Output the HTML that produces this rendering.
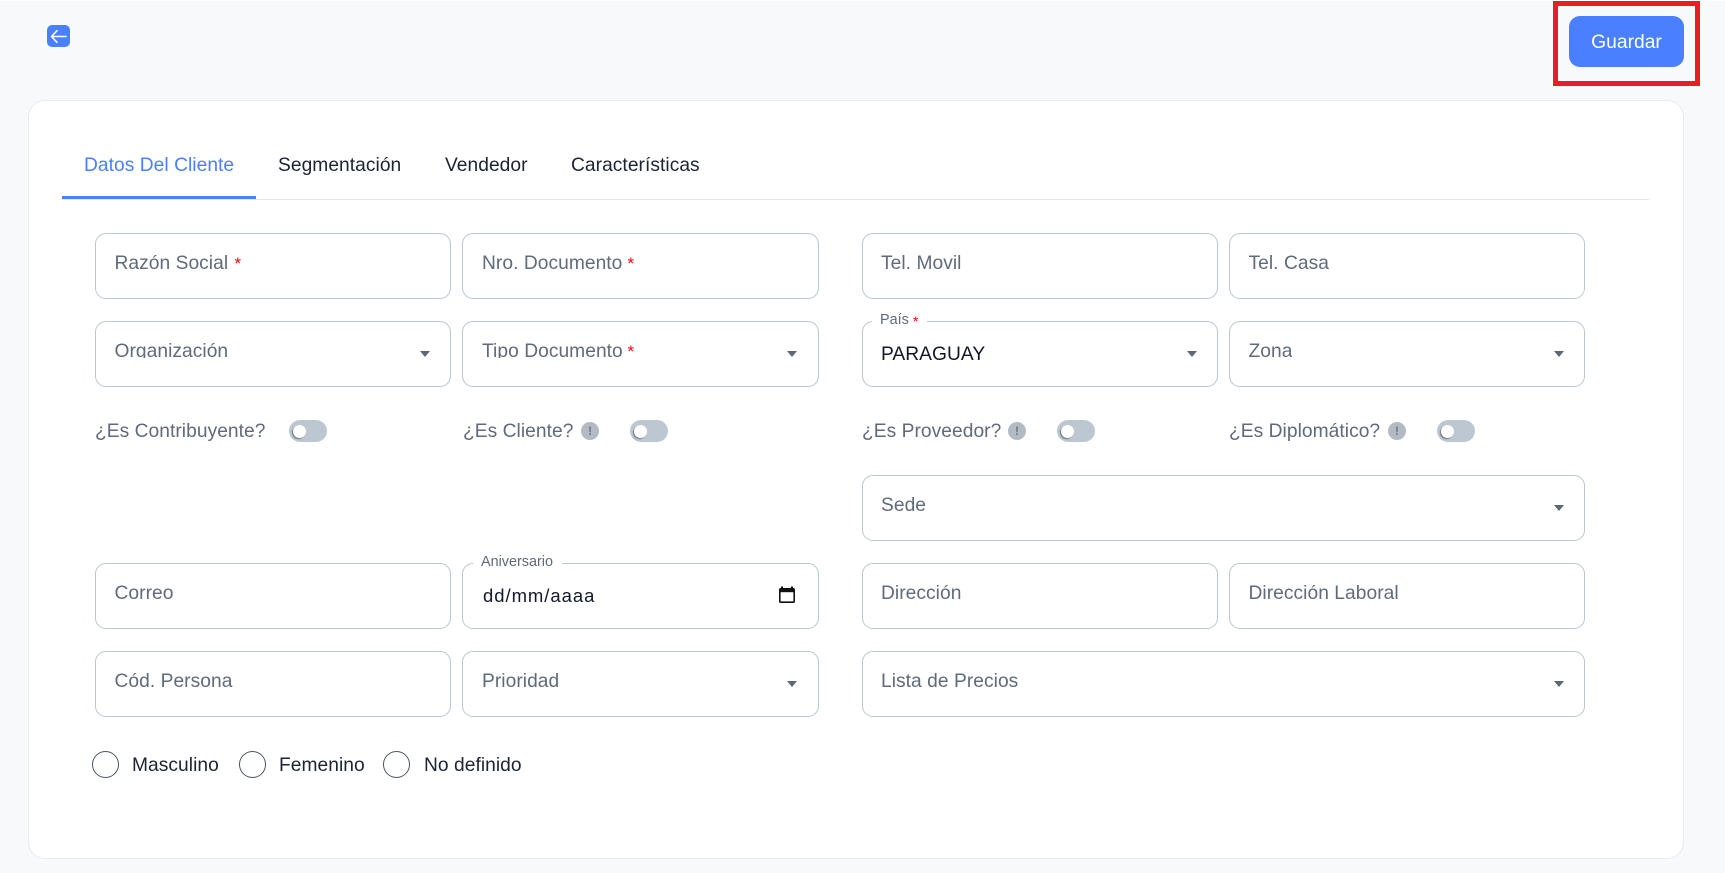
<!DOCTYPE html>
<html lang="es">
<head>
<meta charset="utf-8">
<title>Datos Del Cliente</title>
<style>
html,body{margin:0;padding:0;width:1725px;height:873px;overflow:hidden;background:#f8f9fb;font-family:"Liberation Sans",Arial,sans-serif}
#top{position:absolute;left:0;top:0;width:1725px;height:1px;background:#fff}
.t{position:absolute;white-space:nowrap;line-height:24px;height:24px;font-size:19.2px;letter-spacing:.05px;color:#5f6b7a}
.clip{height:18px;overflow:hidden}
.d{color:#1b2433}
.f{position:absolute;box-sizing:border-box;border:1px solid #bcc6d0;border-radius:11px;background:#fff}
.c{position:absolute;width:0;height:0;border-left:5.5px solid transparent;border-right:5.5px solid transparent;border-top:6.5px solid #5c6876}
.a{position:absolute;color:#f00;font-size:17px;line-height:16px;height:16px}
.s{position:absolute;width:38px;height:22px;top:420px;border-radius:11px;background:#bcc7d1}
.s i{position:absolute;left:3.5px;top:4.5px;width:13px;height:13px;border-radius:50%;background:#fff;box-shadow:-1px 1px 1px #6f7985}
.n{position:absolute;top:422px;width:18px;height:18px;border-radius:50%;background:#b2bac3;color:#6f7883;font-size:12px;line-height:18px;text-align:center;font-weight:bold}
.r{position:absolute;top:751px;width:27px;height:27px;box-sizing:border-box;border:1px solid #4b5563;border-radius:50%;background:#fff}
.g{position:absolute;background:#fff;height:3px}
.sm{position:absolute;white-space:nowrap;font-size:14.4px;line-height:16px;height:16px;color:#5f6b7a}
</style>
</head>
<body>
<div id="top"></div>

<div style="position:absolute;left:47px;top:25px;width:23px;height:22px;border-radius:5px;background:#4a80ff"></div>
<svg style="position:absolute;left:47px;top:25px" width="23" height="22" viewBox="0 0 23 22" fill="none" stroke="#fff" stroke-width="1.5" stroke-linecap="round" stroke-linejoin="round"><path d="M19 11.5H4.5M10 5.7L4.5 11.5l5.5 5.8"/></svg>

<div style="position:absolute;left:1553px;top:1px;width:147px;height:85px;box-sizing:border-box;border:5px solid #ec1c24"></div>
<div style="position:absolute;left:1569px;top:16px;width:115px;height:51px;border-radius:11px;background:#4a80ff;color:#fff;font-size:19.3px;line-height:53px;text-align:center">Guardar</div>

<div style="position:absolute;left:28px;top:100px;width:1656px;height:759px;box-sizing:border-box;background:#fff;border:1px solid #e8ebef;border-radius:17px"></div>

<div style="position:absolute;left:62px;top:199px;width:1587px;height:1px;background:#e5e7eb"></div>
<div style="position:absolute;left:62px;top:196px;width:194px;height:3px;background:#4a80ff"></div>
<div class="t" style="left:84px;top:154px;color:#4a80ff">Datos Del Cliente</div>
<div class="t d" style="left:278px;top:154px">Segmentación</div>
<div class="t d" style="left:445px;top:154px">Vendedor</div>
<div class="t d" style="left:571px;top:154px">Características</div>

<!-- row 1 -->
<div class="f" style="left:95px;top:233px;width:356px;height:66px"></div>
<div class="f" style="left:462px;top:233px;width:357px;height:66px"></div>
<div class="f" style="left:862px;top:233px;width:356px;height:66px"></div>
<div class="f" style="left:1229px;top:233px;width:356px;height:66px"></div>
<div class="t" style="left:114.5px;top:252px">Razón Social</div><div class="a" style="left:234.5px;top:256px">*</div>
<div class="t" style="left:482px;top:252px">Nro. Documento</div><div class="a" style="left:627.5px;top:256px">*</div>
<div class="t" style="left:881px;top:252px">Tel. Movil</div>
<div class="t" style="left:1248.5px;top:252px">Tel. Casa</div>

<!-- row 2 -->
<div class="f" style="left:95px;top:321px;width:356px;height:66px"></div>
<div class="f" style="left:462px;top:321px;width:357px;height:66px"></div>
<div class="f" style="left:862px;top:321px;width:356px;height:66px"></div>
<div class="f" style="left:1229px;top:321px;width:356px;height:66px"></div>
<div class="t clip" style="left:114.5px;top:340px">Organización</div>
<div class="t clip" style="left:482px;top:340px">Tipo Documento</div><div class="a" style="left:627.5px;top:344px">*</div>
<div class="g" style="left:872px;top:320px;width:55px"></div>
<div class="sm" style="left:880px;top:312px">País</div><div class="a" style="left:913px;top:313px;font-size:14px">*</div>
<div class="t d" style="left:881px;top:343px;color:#111827">PARAGUAY</div>
<div class="t clip" style="left:1248.5px;top:340px">Zona</div>
<div class="c" style="left:419.5px;top:351px"></div>
<div class="c" style="left:787px;top:351px"></div>
<div class="c" style="left:1186.5px;top:351px"></div>
<div class="c" style="left:1554px;top:351px"></div>

<!-- toggles -->
<div class="t" style="left:95px;top:420px">¿Es Contribuyente?</div>
<div class="s" style="left:289px"><i></i></div>
<div class="t" style="left:463px;top:420px">¿Es Cliente?</div>
<div class="n" style="left:581px">!</div>
<div class="s" style="left:630px"><i></i></div>
<div class="t" style="left:862px;top:420px">¿Es Proveedor?</div>
<div class="n" style="left:1008px">!</div>
<div class="s" style="left:1057px"><i></i></div>
<div class="t" style="left:1229px;top:420px">¿Es Diplomático?</div>
<div class="n" style="left:1388px">!</div>
<div class="s" style="left:1437px"><i></i></div>

<!-- sede -->
<div class="f" style="left:862px;top:475px;width:723px;height:66px"></div>
<div class="t" style="left:881px;top:494px">Sede</div>
<div class="c" style="left:1554px;top:505px"></div>

<!-- row 4 -->
<div class="f" style="left:95px;top:563px;width:356px;height:66px"></div>
<div class="f" style="left:462px;top:563px;width:357px;height:66px"></div>
<div class="f" style="left:862px;top:563px;width:356px;height:66px"></div>
<div class="f" style="left:1229px;top:563px;width:356px;height:66px"></div>
<div class="t" style="left:114.5px;top:582px">Correo</div>
<div class="g" style="left:473px;top:562px;width:89px"></div>
<div class="sm" style="left:481px;top:554px">Aniversario</div>
<div class="t" style="left:483px;top:584px;color:#111827;font-size:18.5px;letter-spacing:.95px">dd/mm/aaaa</div>
<svg style="position:absolute;left:778px;top:586px" width="18" height="18" viewBox="0 0 18 18"><path d="M4 0.5v2.5M14 0.5v2.5" stroke="#111" stroke-width="2"/><rect x="1.8" y="2.8" width="14.4" height="13.4" rx="1" fill="#fff" stroke="#111" stroke-width="1.6"/><rect x="1.8" y="2.8" width="14.4" height="3.4" fill="#111"/></svg>
<div class="t" style="left:881px;top:582px">Dirección</div>
<div class="t" style="left:1248.5px;top:582px">Dirección Laboral</div>

<!-- row 5 -->
<div class="f" style="left:95px;top:651px;width:356px;height:66px"></div>
<div class="f" style="left:462px;top:651px;width:357px;height:66px"></div>
<div class="f" style="left:862px;top:651px;width:723px;height:66px"></div>
<div class="t" style="left:114.5px;top:670px">Cód. Persona</div>
<div class="t" style="left:482px;top:670px">Prioridad</div>
<div class="t" style="left:881px;top:670px">Lista de Precios</div>
<div class="c" style="left:787px;top:681px"></div>
<div class="c" style="left:1554px;top:681px"></div>

<!-- radios -->
<div class="r" style="left:92px"></div>
<div class="t d" style="left:132px;top:754px">Masculino</div>
<div class="r" style="left:239px"></div>
<div class="t d" style="left:279px;top:754px">Femenino</div>
<div class="r" style="left:383px"></div>
<div class="t d" style="left:424px;top:754px">No definido</div>
</body>
</html>
